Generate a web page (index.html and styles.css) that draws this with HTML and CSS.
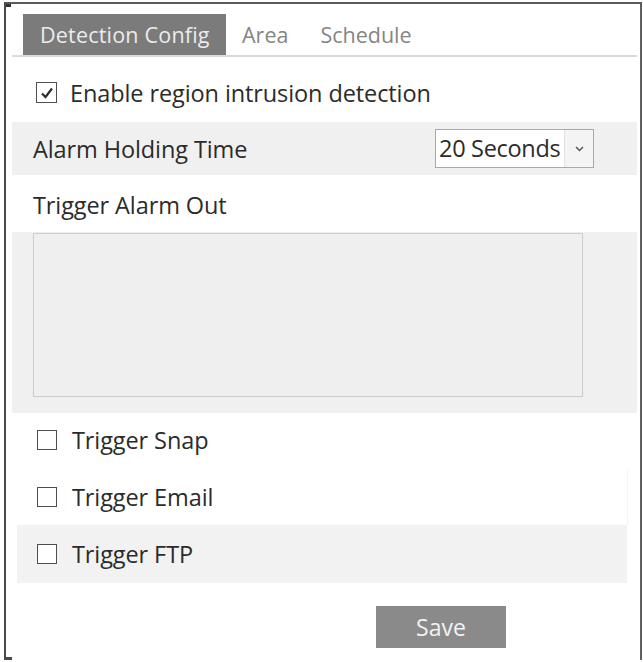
FILE: index.html
```html
<!DOCTYPE html>
<html>
<head>
<meta charset="utf-8">
<link rel="stylesheet" href="styles.css">
</head>
<body>
<div class="frame">
  <div class="tabs">
    <div class="tab active">Detection Config</div>
    <div class="tab">Area</div>
    <div class="tab">Schedule</div>
  </div>

  <div class="row enable">
    <span class="cb checked"><svg width="18" height="18" viewBox="0 0 18 18"><path d="M4 9.5 L7.5 13 L14 4.5" fill="none" stroke="#2e2e2e" stroke-width="2.2"/></svg></span>
    <span class="label">Enable region intrusion detection</span>
  </div>

  <div class="row alarm">
    <span class="label">Alarm Holding Time</span>
    <div class="select">
      <span class="select-value">20 Seconds</span>
      <span class="select-arrow"><svg width="9" height="6" viewBox="0 0 9 6"><path d="M1 1 L4.5 4.5 L8 1" fill="none" stroke="#555" stroke-width="1.5"/></svg></span>
    </div>
  </div>

  <div class="row out-label">
    <span class="label">Trigger Alarm Out</span>
  </div>

  <div class="out-area">
    <div class="out-box"></div>
  </div>

  <div class="row snap">
    <span class="cb"></span>
    <span class="label">Trigger Snap</span>
  </div>

  <div class="row email">
    <span class="cb"></span>
    <span class="label">Trigger Email</span>
  </div>

  <div class="row ftp">
    <span class="cb"></span>
    <span class="label">Trigger FTP</span>
  </div>

  <div class="actions">
    <button class="save">Save</button>
  </div>

  <span class="foot"></span>
  <span class="corner"></span>
</div>
</body>
</html>
```

FILE: styles.css
```css
html, body {
  margin: 0;
  padding: 0;
  background: #ffffff;
}

body {
  font-family: "Open Sans", "Noto Sans", sans-serif;
  color: #2b2b2b;
}

.frame {
  position: relative;
  box-sizing: border-box;
  margin: 2px 1px 0 4px;
  width: 638px;
  height: 658px;
  border-top: 2px solid #5a5a5a;
  border-left: 2px solid #4a4a4a;
  border-right: 2px solid #5f5f5f;
  padding: 0 3px 0 6px;
}

.foot {
  position: absolute;
  left: -2px;
  bottom: 0;
  width: 8px;
  height: 3px;
  background: #4a4a4a;
}

.corner {
  position: absolute;
  left: 0;
  top: 0;
  width: 5px;
  height: 3px;
  background: #333;
}

/* Tabs */
.tabs {
  display: flex;
  margin-top: 10px;
  border-bottom: 2px solid #dadada;
}

.tab {
  height: 41px;
  line-height: 41px;
  padding: 0 16px;
  font-size: 21.5px;
  color: #858585;
  letter-spacing: 0;
}

.tab.active {
  margin-left: 11px;
  width: 203px;
  box-sizing: border-box;
  padding: 0 0 0 17px;
  background: #7b7b7b;
  color: #ececec;
  letter-spacing: 0.2px;
}

/* Rows */
.row {
  display: flex;
  align-items: center;
  font-size: 23.5px;
}

.label {
  white-space: nowrap;
  letter-spacing: -0.1px;
}

.cb {
  box-sizing: border-box;
  width: 20px;
  height: 20px;
  border: 1.5px solid #4f4f4f;
  background: #fff;
  display: flex;
  align-items: center;
  justify-content: center;
  flex: none;
}

.enable {
  height: 65px;
  padding: 6px 0 0 24px;
  box-sizing: border-box;
}

.enable .cb {
  width: 21px;
  height: 21px;
  margin-right: 13px;
}

.alarm {
  height: 53px;
  background: #f0f0f0;
  padding-left: 21px;
}

.select {
  margin-left: auto;
  margin-right: 43px;
  width: 159px;
  height: 39px;
  box-sizing: border-box;
  border: 1px solid #a9a9a9;
  background: #ffffff;
  display: flex;
  align-items: stretch;
}

.select-value {
  flex: 1;
  padding-left: 3px;
  line-height: 37px;
  white-space: nowrap;
  letter-spacing: -0.3px;
  color: #2b2b2b;
}

.select-arrow {
  width: 28px;
  border-left: 1px solid #e2e2e2;
  background: #f4f4f4;
  display: flex;
  align-items: center;
  justify-content: center;
}

.out-label {
  height: 57px;
  padding: 2px 0 0 21px;
  box-sizing: border-box;
}

.out-area {
  height: 181px;
  background: #f0f0f0;
  padding: 1px 0 0 21px;
  box-sizing: border-box;
}

.out-box {
  width: 550px;
  height: 164px;
  box-sizing: border-box;
  border: 1px solid #cdcdcd;
  background: #efefef;
  box-shadow: 0 0 1px rgba(0, 0, 0, 0.08);
}

.snap {
  height: 55px;
  padding-left: 25px;
  padding-bottom: 2px;
  box-sizing: border-box;
}

.email {
  height: 57px;
  margin: 0 10px 0 5px;
  padding-left: 20px;
  background: #ffffff;
  box-shadow: 1px 0 1px rgba(0, 0, 0, 0.04);
}

.ftp {
  height: 58px;
  margin: 0 10px 0 5px;
  padding-left: 20px;
  background: #f2f2f2;
}

.snap .cb,
.email .cb,
.ftp .cb {
  margin-right: 15px;
}

.actions {
  display: flex;
  padding: 23px 0 0 364px;
}

.save {
  width: 130px;
  height: 42px;
  border: none;
  background: #8a8a8a;
  color: #f2f2f2;
  font-family: "Open Sans", "Noto Sans", sans-serif;
  font-size: 23px;
  padding: 0;
  cursor: pointer;
}
```
